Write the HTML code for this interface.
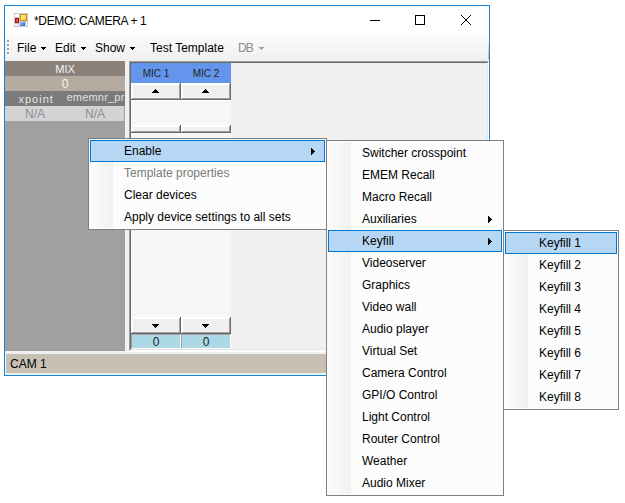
<!DOCTYPE html>
<html><head><meta charset="utf-8">
<style>
*{margin:0;padding:0;box-sizing:border-box}
html,body{width:625px;height:503px;overflow:hidden;background:#fff}
body{position:relative;font-family:"Liberation Sans",sans-serif;font-size:12px;color:#000}
.a{position:absolute}
.t{position:absolute;white-space:nowrap;line-height:14px;font-size:12px}
.chk{background-color:#fff;background-image:repeating-conic-gradient(#fff 0 25%,#eeeeee 0 50%);background-size:2px 2px;background-position:1px 0}
.btn{position:absolute;background:#f0f0f0;box-shadow:inset -1px -1px 0 #696969,inset 1px 1px 0 #fff,inset -2px -2px 0 #a0a0a0,inset 2px 2px 0 #fff}
.menu{position:absolute;background:#fcfcfc;border:1px solid #808080}
.marg{position:absolute;background:linear-gradient(to right,#fcfcfc,#f1f1f1)}
.hl{position:absolute;background:#b5d7f3;border:1px solid #0078d7}
.arr{position:absolute;width:4px;height:7px}
.arr svg,svg{display:block}
</style></head><body>

<!-- window frame -->
<div class="a" style="left:4px;top:5px;width:486px;height:371px;border:1px solid #1883d7;background:#fff"></div>

<!-- title icon -->
<svg class="a" style="left:13px;top:12px" width="16" height="16" viewBox="0 0 16 16" shape-rendering="crispEdges">
  <defs>
   <linearGradient id="gy" x1="0" y1="0" x2="1" y2="1"><stop offset="0" stop-color="#fff0a8"/><stop offset="1" stop-color="#ffc81e"/></linearGradient>
   <linearGradient id="gb" x1="0" y1="0" x2="1" y2="1"><stop offset="0" stop-color="#9cc4ff"/><stop offset="1" stop-color="#2a62d6"/></linearGradient>
   <linearGradient id="gr" x1="0" y1="0" x2="0" y2="1"><stop offset="0" stop-color="#e04040"/><stop offset="1" stop-color="#a00c0c"/></linearGradient>
  </defs>
  <rect x="1" y="1" width="14" height="14" fill="#c8c8c8"/>
  <rect x="2" y="2" width="4" height="3" fill="#fff"/>
  <rect x="2" y="6" width="4" height="5" fill="#b01010"/>
  <rect x="3" y="7" width="2" height="3" fill="#d85050"/>
  <rect x="2" y="12" width="2" height="2" fill="#fff"/>
  <rect x="5" y="12" width="1" height="2" fill="#fff"/>
  <rect x="7" y="2" width="7" height="7" fill="#c8960e"/>
  <rect x="8" y="3" width="5" height="5" fill="url(#gy)"/>
  <rect x="7" y="10" width="5" height="4" fill="url(#gb)"/>
  <rect x="13" y="10" width="1" height="4" fill="#fff"/>
</svg>
<div class="t" style="left:34px;top:14px;letter-spacing:-0.35px">*DEMO: CAMERA + 1</div>

<!-- title buttons -->
<div class="a" style="left:370px;top:20px;width:10px;height:1px;background:#000"></div>
<div class="a" style="left:415px;top:15px;width:10px;height:10px;border:1px solid #000"></div>
<svg class="a" style="left:461px;top:15px" width="10" height="10" viewBox="0 0 10 10" shape-rendering="crispEdges">
  <g fill="#000">
  <rect x="0" y="0" width="1" height="1"/><rect x="1" y="1" width="1" height="1"/><rect x="2" y="2" width="1" height="1"/><rect x="3" y="3" width="1" height="1"/><rect x="4" y="4" width="1" height="1"/><rect x="5" y="5" width="1" height="1"/><rect x="6" y="6" width="1" height="1"/><rect x="7" y="7" width="1" height="1"/><rect x="8" y="8" width="1" height="1"/><rect x="9" y="9" width="1" height="1"/>
  <rect x="9" y="0" width="1" height="1"/><rect x="8" y="1" width="1" height="1"/><rect x="7" y="2" width="1" height="1"/><rect x="6" y="3" width="1" height="1"/><rect x="5" y="4" width="1" height="1"/><rect x="4" y="5" width="1" height="1"/><rect x="3" y="6" width="1" height="1"/><rect x="2" y="7" width="1" height="1"/><rect x="1" y="8" width="1" height="1"/><rect x="0" y="9" width="1" height="1"/>
  </g>
</svg>

<!-- toolbar -->
<div class="a" style="left:5px;top:36px;width:484px;height:25px;background:linear-gradient(#fbfbfb,#efefef)"></div>
<div class="a" style="left:488px;top:42px;width:1px;height:17px;background:linear-gradient(#f0f0f0,#b8b8b8)"></div>
<div class="a" style="left:7px;top:40px;width:2px;height:2px;background:#a0a0a0;box-shadow:1px 1px 0 #fff"></div>
<div class="a" style="left:7px;top:44px;width:2px;height:2px;background:#a0a0a0;box-shadow:1px 1px 0 #fff"></div>
<div class="a" style="left:7px;top:48px;width:2px;height:2px;background:#a0a0a0;box-shadow:1px 1px 0 #fff"></div>
<div class="a" style="left:7px;top:52px;width:2px;height:2px;background:#a0a0a0;box-shadow:1px 1px 0 #fff"></div>
<div class="t" style="left:17px;top:41px">File</div>
<div class="t" style="left:55px;top:41px">Edit</div>
<div class="t" style="left:95px;top:41px">Show</div>
<div class="t" style="left:150px;top:41px">Test Template</div>
<div class="t" style="left:238px;top:41px;color:#8a8a8a;letter-spacing:-0.8px">DB</div>
<svg class="a" style="left:0;top:0" width="300" height="60" shape-rendering="crispEdges">
  <g fill="#000">
   <rect x="41" y="47" width="5" height="1"/><rect x="42" y="48" width="3" height="1"/><rect x="43" y="49" width="1" height="1"/>
   <rect x="81" y="47" width="5" height="1"/><rect x="82" y="48" width="3" height="1"/><rect x="83" y="49" width="1" height="1"/>
   <rect x="130" y="47" width="5" height="1"/><rect x="131" y="48" width="3" height="1"/><rect x="132" y="49" width="1" height="1"/>
  </g>
  <g fill="#a0a0a0">
   <rect x="259" y="47" width="5" height="1"/><rect x="260" y="48" width="3" height="1"/><rect x="261" y="49" width="1" height="1"/>
  </g>
</svg>

<!-- content bg -->
<div class="a" style="left:5px;top:61px;width:484px;height:314px;background:#f0f0f0"></div>

<!-- MIX panel -->
<div class="a" style="left:5px;top:61px;width:120px;height:290px;background:#a0a0a0"></div>
<div class="a" style="left:5px;top:61px;width:120px;height:15px;background:#8a817b"></div>
<div class="a" style="left:5px;top:76px;width:120px;height:15px;background:#b4aa9e"></div>
<div class="a" style="left:5px;top:91px;width:120px;height:15px;background:#7b7b7b"></div>
<div class="a" style="left:5px;top:106px;width:119px;height:15px;background:#d3d3d3"></div>
<div class="t" style="left:5px;width:120px;text-align:center;top:62px;font-size:11px;color:#f4f4f4">MIX</div>
<div class="t" style="left:5px;width:120px;text-align:center;top:77px;font-size:12px;color:#f4f4f4">0</div>
<div class="t" style="left:18.5px;top:92px;font-size:11px;color:#e4e4e4;letter-spacing:1px">xpoint</div>
<div class="a" style="left:65px;top:91px;width:60px;height:15px;overflow:hidden">
  <div class="t" style="left:1.5px;top:-1px;font-size:11px;letter-spacing:0.2px;color:#e0e0e0">ememnr_pr</div>
</div>
<div class="t" style="left:5px;width:60px;text-align:center;top:107px;font-size:12px;color:#8e8e96">N/A</div>
<div class="t" style="left:65px;width:60px;text-align:center;top:107px;font-size:12px;color:#8e8e96">N/A</div>

<!-- MIC container 3D border -->
<div class="a" style="left:129px;top:61px;width:360px;height:290px;border-top:1px solid #a0a0a0;border-left:1px solid #a0a0a0;border-right:1px solid #fff;border-bottom:1px solid #fff"></div>
<div class="a" style="left:130px;top:62px;width:358px;height:288px;border-top:1px solid #696969;border-left:1px solid #696969;border-right:1px solid #e3e3e3;border-bottom:1px solid #e3e3e3"></div>

<!-- MIC columns -->
<div class="a" style="left:131px;top:63px;width:100px;height:20px;background:#6495ed"></div>
<div class="t" style="left:131px;width:50px;text-align:center;top:67px;font-size:10px;letter-spacing:0px;color:#222">MIC 1</div>
<div class="t" style="left:181px;width:50px;text-align:center;top:67px;font-size:10px;letter-spacing:0px;color:#222">MIC 2</div>
<div class="btn" style="left:131px;top:83px;width:50px;height:17px"></div>
<div class="btn" style="left:181px;top:83px;width:50px;height:17px"></div>
<div class="a chk" style="left:131px;top:100px;width:100px;height:217px"></div>
<div class="a" style="left:131px;top:100px;width:100px;height:1px;background:#fff"></div>
<div class="a" style="left:131px;top:100px;width:1px;height:217px;background:#fff"></div>
<div class="btn" style="left:131px;top:125px;width:50px;height:8px"></div>
<div class="btn" style="left:181px;top:125px;width:50px;height:8px"></div>
<div class="btn" style="left:131px;top:317px;width:50px;height:17px"></div>
<div class="btn" style="left:181px;top:317px;width:50px;height:17px"></div>
<div class="a" style="left:131px;top:334px;width:50px;height:15px;background:#add8e6;border-left:1px solid #a0a0a0;border-top:1px solid #a0a0a0;border-right:1px solid #fff;border-bottom:1px solid #fff"></div>
<div class="a" style="left:181px;top:334px;width:50px;height:15px;background:#add8e6;border-left:1px solid #a0a0a0;border-top:1px solid #a0a0a0;border-right:1px solid #fff;border-bottom:1px solid #fff"></div>
<div class="t" style="left:131px;width:50px;text-align:center;top:335px;font-size:12px;color:#222">0</div>
<div class="t" style="left:181px;width:50px;text-align:center;top:335px;font-size:12px;color:#222">0</div>
<svg class="a" style="left:0;top:0" width="300" height="340" shape-rendering="crispEdges">
  <g fill="#000">
   <rect x="155" y="89" width="1" height="1"/><rect x="154" y="90" width="3" height="1"/><rect x="153" y="91" width="5" height="1"/><rect x="152" y="92" width="7" height="1"/>
   <rect x="205" y="89" width="1" height="1"/><rect x="204" y="90" width="3" height="1"/><rect x="203" y="91" width="5" height="1"/><rect x="202" y="92" width="7" height="1"/>
   <rect x="152" y="324" width="7" height="1"/><rect x="153" y="325" width="5" height="1"/><rect x="154" y="326" width="3" height="1"/><rect x="155" y="327" width="1" height="1"/>
   <rect x="202" y="324" width="7" height="1"/><rect x="203" y="325" width="5" height="1"/><rect x="204" y="326" width="3" height="1"/><rect x="205" y="327" width="1" height="1"/>
  </g>
</svg>

<!-- status bar -->
<div class="a" style="left:125px;top:351px;width:364px;height:1px;background:#fff"></div>
<div class="a" style="left:6px;top:354px;width:483px;height:19px;background:#c8c0b5"></div>
<div class="t" style="left:10px;top:357px">CAM 1</div>

<!-- menu 1 -->
<div class="menu" style="left:88px;top:138px;width:239px;height:92px"></div>
<div class="marg" style="left:90px;top:140px;width:23px;height:88px"></div>
<div class="hl" style="left:90px;top:140px;width:235px;height:22px"></div>
<div class="t" style="left:124px;top:144px">Enable</div>
<div class="t" style="left:124px;top:166px;color:#7a7a7a">Template properties</div>
<div class="t" style="left:124px;top:188px">Clear devices</div>
<div class="t" style="left:124px;top:210px">Apply device settings to all sets</div>
<div class="arr" style="left:311px;top:148px"><svg width="4" height="7" shape-rendering="crispEdges"><rect x="0" y="0" width="1" height="7"/><rect x="1" y="1" width="1" height="5"/><rect x="2" y="2" width="1" height="3"/><rect x="3" y="3" width="1" height="1"/></svg></div>

<!-- menu 2 -->
<div class="menu" style="left:326px;top:140px;width:178px;height:356px"></div>
<div class="marg" style="left:328px;top:142px;width:23px;height:352px"></div>
<div class="hl" style="left:328px;top:230px;width:174px;height:22px"></div>
<div class="t" style="left:362px;top:146px">Switcher crosspoint</div>
<div class="t" style="left:362px;top:168px">EMEM Recall</div>
<div class="t" style="left:362px;top:190px">Macro Recall</div>
<div class="t" style="left:362px;top:212px">Auxiliaries</div>
<div class="t" style="left:362px;top:234px">Keyfill</div>
<div class="t" style="left:362px;top:256px">Videoserver</div>
<div class="t" style="left:362px;top:278px">Graphics</div>
<div class="t" style="left:362px;top:300px">Video wall</div>
<div class="t" style="left:362px;top:322px">Audio player</div>
<div class="t" style="left:362px;top:344px">Virtual Set</div>
<div class="t" style="left:362px;top:366px">Camera Control</div>
<div class="t" style="left:362px;top:388px">GPI/O Control</div>
<div class="t" style="left:362px;top:410px">Light Control</div>
<div class="t" style="left:362px;top:432px">Router Control</div>
<div class="t" style="left:362px;top:454px">Weather</div>
<div class="t" style="left:362px;top:476px">Audio Mixer</div>
<div class="arr" style="left:488px;top:216px"><svg width="4" height="7" shape-rendering="crispEdges"><rect x="0" y="0" width="1" height="7"/><rect x="1" y="1" width="1" height="5"/><rect x="2" y="2" width="1" height="3"/><rect x="3" y="3" width="1" height="1"/></svg></div>
<div class="arr" style="left:488px;top:238px"><svg width="4" height="7" shape-rendering="crispEdges"><rect x="0" y="0" width="1" height="7"/><rect x="1" y="1" width="1" height="5"/><rect x="2" y="2" width="1" height="3"/><rect x="3" y="3" width="1" height="1"/></svg></div>

<!-- menu 3 -->
<div class="menu" style="left:503px;top:230px;width:116px;height:180px"></div>
<div class="marg" style="left:505px;top:232px;width:23px;height:176px"></div>
<div class="hl" style="left:505px;top:232px;width:112px;height:22px"></div>
<div class="t" style="left:539px;top:236px">Keyfill 1</div>
<div class="t" style="left:539px;top:258px">Keyfill 2</div>
<div class="t" style="left:539px;top:280px">Keyfill 3</div>
<div class="t" style="left:539px;top:302px">Keyfill 4</div>
<div class="t" style="left:539px;top:324px">Keyfill 5</div>
<div class="t" style="left:539px;top:346px">Keyfill 6</div>
<div class="t" style="left:539px;top:368px">Keyfill 7</div>
<div class="t" style="left:539px;top:390px">Keyfill 8</div>

</body></html>
